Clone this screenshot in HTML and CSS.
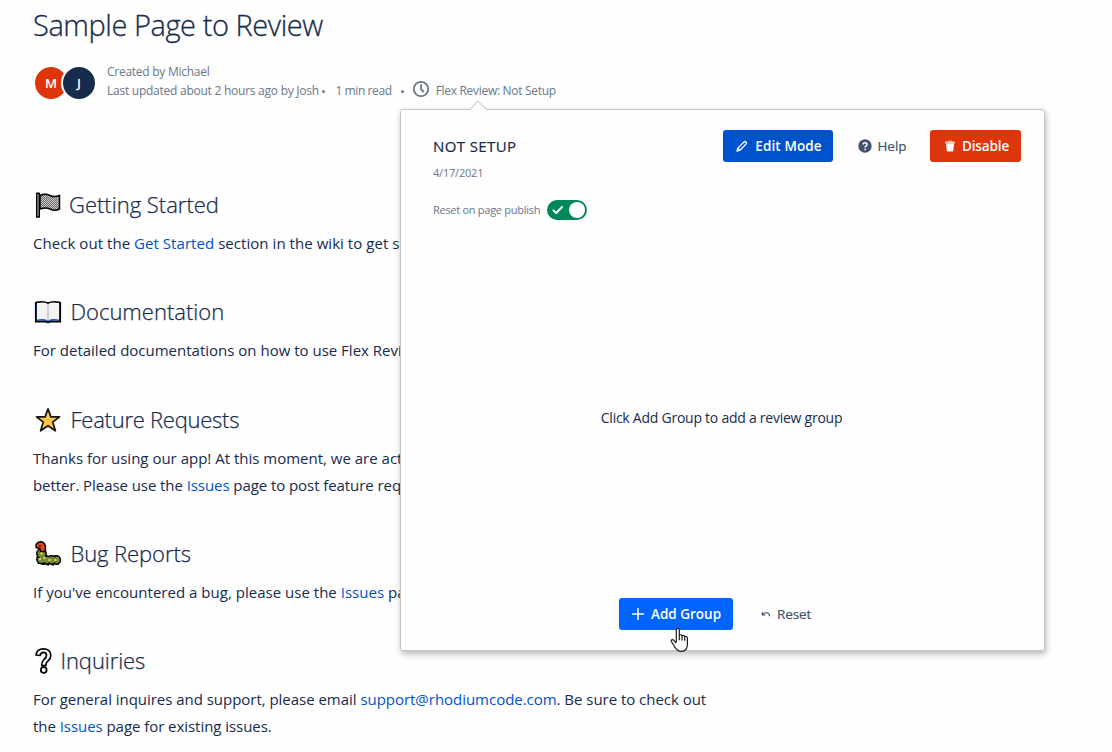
FILE: index.html
```html
<!DOCTYPE html>
<html lang="en">
<head>
<meta charset="utf-8">
<title>Sample Page to Review</title>
<link rel="stylesheet" href="styles.css">
</head>
<body>
<main class="page">
  <h1 class="title"><span>Sample Page to Review</span></h1>
  <div class="byline">
    <div class="avatars"><span class="avatar red">M</span><span class="avatar navy">J</span></div>
    <div class="meta">
      <div class="created"><span>Created by Michael</span></div>
      <div class="updated">
        <span class="upd">Last updated about 2 hours ago by Josh</span><i class="dot"></i>
        <span class="read">1 min read</span><i class="dot dot2"></i>
        <svg class="clock" width="18" height="18" viewBox="0 0 18 18" fill="none" stroke="#6b7487" stroke-width="1.8" stroke-linecap="round"><circle cx="9" cy="9" r="7.2"/><path d="M9 4.8V9.2L11.3 11.5"/></svg>
        <span class="flex-review">Flex Review: Not Setup</span>
      </div>
    </div>
  </div>

  <section class="section">
    <h2 class="heading h-start">
      <svg class="emoji" width="28" height="28" viewBox="0 0 28 28"><defs><pattern id="checks" width="2" height="2" patternUnits="userSpaceOnUse"><rect width="2" height="2" fill="#d2ced2"/><path d="M0 0h1v1H0zM1 1h1v1H1z" fill="#696269"/></pattern></defs><path d="M6 4.500C10 2.500 13 3 16 4.500S22 6 25.500 4.500V18C22 20 19 19.500 16 18S10 16.500 6 18z" fill="url(#checks)" stroke="#000" stroke-width="1.500"/><path d="M2.700 2.200h2.600V26H2.700z" fill="#aaa" stroke="#000" stroke-width="1.400" stroke-linejoin="round"/></svg>
      <span>Getting Started</span></h2>
    <p class="text p1">Check out the <a>Get Started</a> section in the wiki to get started</p>
  </section>
  <section class="section">
    <h2 class="heading h-docs">
      <svg class="emoji" width="28" height="28" viewBox="0 0 28 28"><path d="M1.700 4.700h24.600v19h-10l-2.300.8-2.300-.8h-10z" fill="#2b5a96" stroke="#000" stroke-width="1.600"/><path d="M3 4.700C8 3.500 12 4 14 5.500 16 4 20 3.500 25 4.700V21.500C20 20.500 16 21 14 22.500 12 21 8 20.500 3 21.500z" fill="#f2f2f2"/><path d="M2 4.300C8 3.300 12 3.800 14 5.300 16 3.800 20 3.300 26 4.300" fill="none" stroke="#000" stroke-width="1.400"/><path d="M14 6v16" stroke="#aaa"/></svg>
      <span>Documentation</span></h2>
    <p class="text p2">For detailed documentations on how to use Flex Review</p>
  </section>
  <section class="section">
    <h2 class="heading h-feature">
      <svg class="emoji" width="28" height="28" viewBox="0 0 28 28"><path d="M14 2.800L16.900 10.900H25.500L18.700 16.100 21.400 24.800 14 19.700 6.600 24.800 9.300 16.100 2.500 10.900H11.100z" fill="#ffc547" stroke="#111" stroke-width="1.700" stroke-linejoin="round"/></svg>
      <span>Feature Requests</span></h2>
    <p class="text"><span class="p3">Thanks for using our app! At this moment, we are actively</span><br><span class="p4">better. Please use the <a>Issues</a> page to post feature requests</span></p>
  </section>
  <section class="section">
    <h2 class="heading h-bug">
      <svg class="emoji" width="28" height="28" viewBox="0 0 28 28"><g fill="#6f8c3b" stroke="#000" stroke-width="1.500"><path d="M5 21v3M9 22v3M14 22v3.500M19 22v3.500M23.500 22v3" stroke-width="2.500"/><circle cx="22.300" cy="20" r="4.200"/><circle cx="17.500" cy="20" r="4.200"/><circle cx="12" cy="20" r="4.200"/><circle cx="7.500" cy="19" r="4.700"/><circle cx="7.500" cy="13.500" r="4.700"/><path d="M2.200 7.500C1 5 3 2 6.500 1.800 10 1.800 11.800 4 11.500 9.500L11 11.500H6.500L6 8.500z" fill="#e6421b"/></g><path d="M8 13.500L9 19.500 22 20" fill="none" stroke="#6f8c3b" stroke-width="5"/><g fill="#f7c948"><circle cx="7.500" cy="13.500" r="1.200"/><circle cx="10.500" cy="18" r="1.200"/><circle cx="6" cy="19" r="1.200"/><circle cx="15.500" cy="20" r="1.300"/><circle cx="21.500" cy="20" r="1.300"/></g><circle cx="6" cy="5.800" r="1.300" fill="#8d1b11"/></svg>
      <span>Bug Reports</span></h2>
    <p class="text p5">If you've encountered a bug, please use the <a>Issues</a> page</p>
  </section>
  <section class="section">
    <h2 class="heading h-inq">
      <svg class="emoji narrow" width="18" height="28" viewBox="0 0 18 28"><g fill="#fff" stroke="#000" stroke-width="1.700" stroke-linejoin="round"><path d="M2 8C2.500 4 5.500 1.800 9.500 1.800 14 1.800 16.800 4.500 16.800 8.500 16.800 12.500 14.500 13.500 13 15 11.800 16.200 11.800 17 11.800 18.700H7.700C7.500 15.500 8.500 14 10 12.500 11.800 11 12.500 10 12.500 8.500 12.500 6.500 11.500 5.300 9.500 5.300 7.500 5.300 6.500 6.500 6.100 8.500z"/><circle cx="9.700" cy="23" r="2.900"/></g></svg>
      <span>Inquiries</span></h2>
    <p class="text"><span class="p6">For general inquires and support, please email <a>support@rhodiumcode.com</a>. Be sure to check out</span><br><span class="p7">the <a>Issues</a> page for existing issues.</span></p>
  </section>
</main>

<aside class="popup">
  <i class="arrow"></i>
  <header class="popup-head">
    <h3 class="status"><span>NOT SETUP</span></h3>
    <button class="btn edit"><svg width="14" height="14" viewBox="0 0 14 14" fill="none" stroke="#fff" stroke-width="1.300" stroke-linejoin="round"><path d="M2 12.200l.8-3.100 5.900-5.900c.8-.8 1.700-.8 2.300-.2s.6 1.500-.2 2.300L5 11.200zM3 9.200l2 2"/></svg><span>Edit Mode</span></button>
    <button class="btn help"><svg width="14" height="14" viewBox="0 0 14 14"><circle cx="7" cy="7" r="6.700" fill="#42526e"/><path d="M5.100 5.600C5.100 3 9 3.100 9 5.500 9 7 7.100 6.800 7.100 8.500M7.100 9.700v1.500" fill="none" stroke="#fff" stroke-width="1.500"/></svg><span>Help</span></button>
    <button class="btn disable"><svg width="12" height="14" viewBox="0 0 12 14"><path d="M1 2.500h10v2H1z" fill="#fbd0ae"/><path d="M4 1.700h4v1H4z" fill="#fbd0ae"/><path d="M2 4.500h8l-.7 7.100q-.1.900-1 .9H3.700q-.9 0-1-.9z" fill="#fff"/></svg><span>Disable</span></button>
  </header>
  <div class="date"><span>4/17/2021</span></div>
  <div class="reset-row"><span class="reset-label">Reset on page publish</span>
    <i class="toggle"><svg width="12" height="10" viewBox="0 0 12 10" fill="none" stroke="#fff" stroke-width="2" stroke-linecap="round" stroke-linejoin="round"><path d="M1.500 5.500L4.200 8 10 2"/></svg><i class="knob"></i></i>
  </div>
  <div class="empty"><span>Click Add Group to add a review group</span></div>
  <footer class="popup-foot">
    <button class="btn add"><svg width="14" height="14" viewBox="0 0 14 14" stroke="#fff" stroke-width="1.500" stroke-linecap="round"><path d="M7 1.500v11M1.500 7h11"/></svg><span>Add Group</span></button>
    <button class="btn reset"><svg width="10" height="8" viewBox="0 0 10 8" fill="none" stroke="#42526e" stroke-width="1.100"><path d="M1.300 2v3h3M1.500 4.900C3.500 2 8.300 1.800 8.600 6.300"/></svg><span>Reset</span></button>
  </footer>
</aside>
<svg class="cursor" width="20" height="26" viewBox="0 0 20 26"><path d="M6.300 15V3C6.300.9 9.300.9 9.300 3V9C9.300 7.300 12 7.300 12 9.300 12 7.900 14.700 8 14.700 10.100 14.900 9 17.400 9.200 17.400 11.200V17C17.400 22 15 24.300 11.300 24.300 8 24.300 6.500 22.500 5 20.300L1.500 14.800C.5 13 2.600 12 3.800 13.300L6.300 16M9.300 9v4.300M12 9.500v4M14.700 10.300v3.500" fill="#fff" stroke="#18191f" stroke-width="1.200" stroke-linejoin="round"/></svg>
</body>
</html>
```

FILE: styles.css
```css
* { box-sizing: border-box; }
body { margin: 0; width: 1112px; height: 752px; overflow: hidden; position: relative; background: #fefefe; color: #172b4d; font-family: "Open Sans", "Noto Sans", sans-serif; font-size: 15px; white-space: nowrap; }
h1, h2, h3, p { margin: 0; font-weight: 400; }
a { color: #0052cc; }
svg { display: block; flex: none; }
.page { padding: 5px 0 0 33px; display: flex; flex-direction: column; }
.title { font-size: 29px; line-height: 40px; font-weight: 300; letter-spacing: -.44px; -webkit-text-stroke: .3px; }
.byline { display: flex; height: 38px; margin-top: 17px; }
.avatars { display: flex; width: 74px; padding-top: 3px; }
.avatar { width: 36px; height: 36px; flex: none; border-radius: 50%; border: 2px solid #fefefe; color: #fff; display: flex; align-items: center; justify-content: center; font-size: 13px; font-weight: 600; }
.red { background: #de350b; }
.navy { background: #172b4d; margin-left: -8px; }
.meta { font-size: 12px; line-height: 19px; color: #6b778c; }
.created { letter-spacing: -.26px; }
.updated { display: flex; height: 19px; align-items: center; }
.upd { letter-spacing: -.25px; }
.read { letter-spacing: -.4px; }
.flex-review { letter-spacing: -.3px; }
.dot { width: 3px; height: 3px; border-radius: 50%; background: #6b778c; margin: 1px 10px 0 3.500px; }
.dot2 { margin: 1px 8px 0 9px; }
.clock { margin: -4px 6px 0 0; }
.section { margin-bottom: 40.3px; }
.byline + .section { margin-top: 90px; }
.heading { display: flex; align-items: center; height: 28px; margin-bottom: 12px; font-size: 22px; line-height: 28px; font-weight: 300; -webkit-text-stroke: .25px; gap: 8.500px; }
.h-start { gap: 7px; }
.h-feature { letter-spacing: -.25px; }
.h-bug, .h-inq { letter-spacing: -.08px; }
.emoji { margin: 2px 0 0 1px; }
.text { font-size: 15px; line-height: 27px; }
.p1 { letter-spacing: .05px; }
.p4 { letter-spacing: -.07px; }
.p5 { letter-spacing: .02px; }
.p6 { letter-spacing: -.03px; }
.p7 { letter-spacing: -.05px; }
.popup { position: absolute; left: 400px; top: 109px; width: 645px; height: 542px; background: #fefefe; border: 1px solid #c4c4c4; border-radius: 3px; box-shadow: 1px 3px 6px rgba(0,0,0,.28); display: flex; flex-direction: column; padding: 20px 23px 20px 32px; }
.arrow { position: absolute; left: 71px; top: -7px; width: 12px; height: 12px; background: #fefefe; border: 1px solid #ccc; border-right: 0; border-bottom: 0; transform: rotate(45deg); }
.popup-head { display: flex; height: 32px; align-items: center; }
.status { font-size: 15px; font-weight: 500; letter-spacing: .4px; flex: 1; -webkit-text-stroke: .2px; }
.btn { height: 32px; border: 0; border-radius: 3px; padding: 0; font: 600 13.5px "Open Sans", "Noto Sans", sans-serif; display: flex; align-items: center; justify-content: center; gap: 6px; color: #fff; background: none; flex: none; }
.edit { width: 110px; background: #0052cc; letter-spacing: .1px; padding-left: 1px; }
.help { width: 73px; margin: 0 12px; color: #42526e; font-weight: 500; gap: 5px; padding-left: 2px; -webkit-text-stroke: .2px; }
.disable { width: 91px; background: #de350b; letter-spacing: -.12px; padding-left: 2px; }
.date, .reset-label { color: #6b778c; font-size: 11px; line-height: 16px; }
.date { margin-top: 3px; letter-spacing: -.2px; }
.reset-row { display: flex; align-items: center; height: 20px; margin-top: 19px; }
.reset-label { width: 114px; letter-spacing: -.28px; }
.toggle { width: 40px; height: 20px; border-radius: 10px; background: #00875a; display: flex; align-items: center; padding: 0 2px 0 5px; justify-content: space-between; }
.knob { width: 16px; height: 16px; border-radius: 50%; background: #fff; }
.empty { flex: 1; display: flex; align-items: center; justify-content: center; font-size: 14px; letter-spacing: -.25px; padding-top: 17px; margin: 0 9px 0 -2px; }
.popup-foot { display: flex; height: 32px; margin-left: 186px; gap: 28px; }
.add { width: 114px; background: #0065ff; }
.reset { color: #42526e; font-weight: 500; gap: 6px; letter-spacing: -.1px; -webkit-text-stroke: .2px; }
.cursor { position: absolute; left: 670px; top: 627px; }
```
